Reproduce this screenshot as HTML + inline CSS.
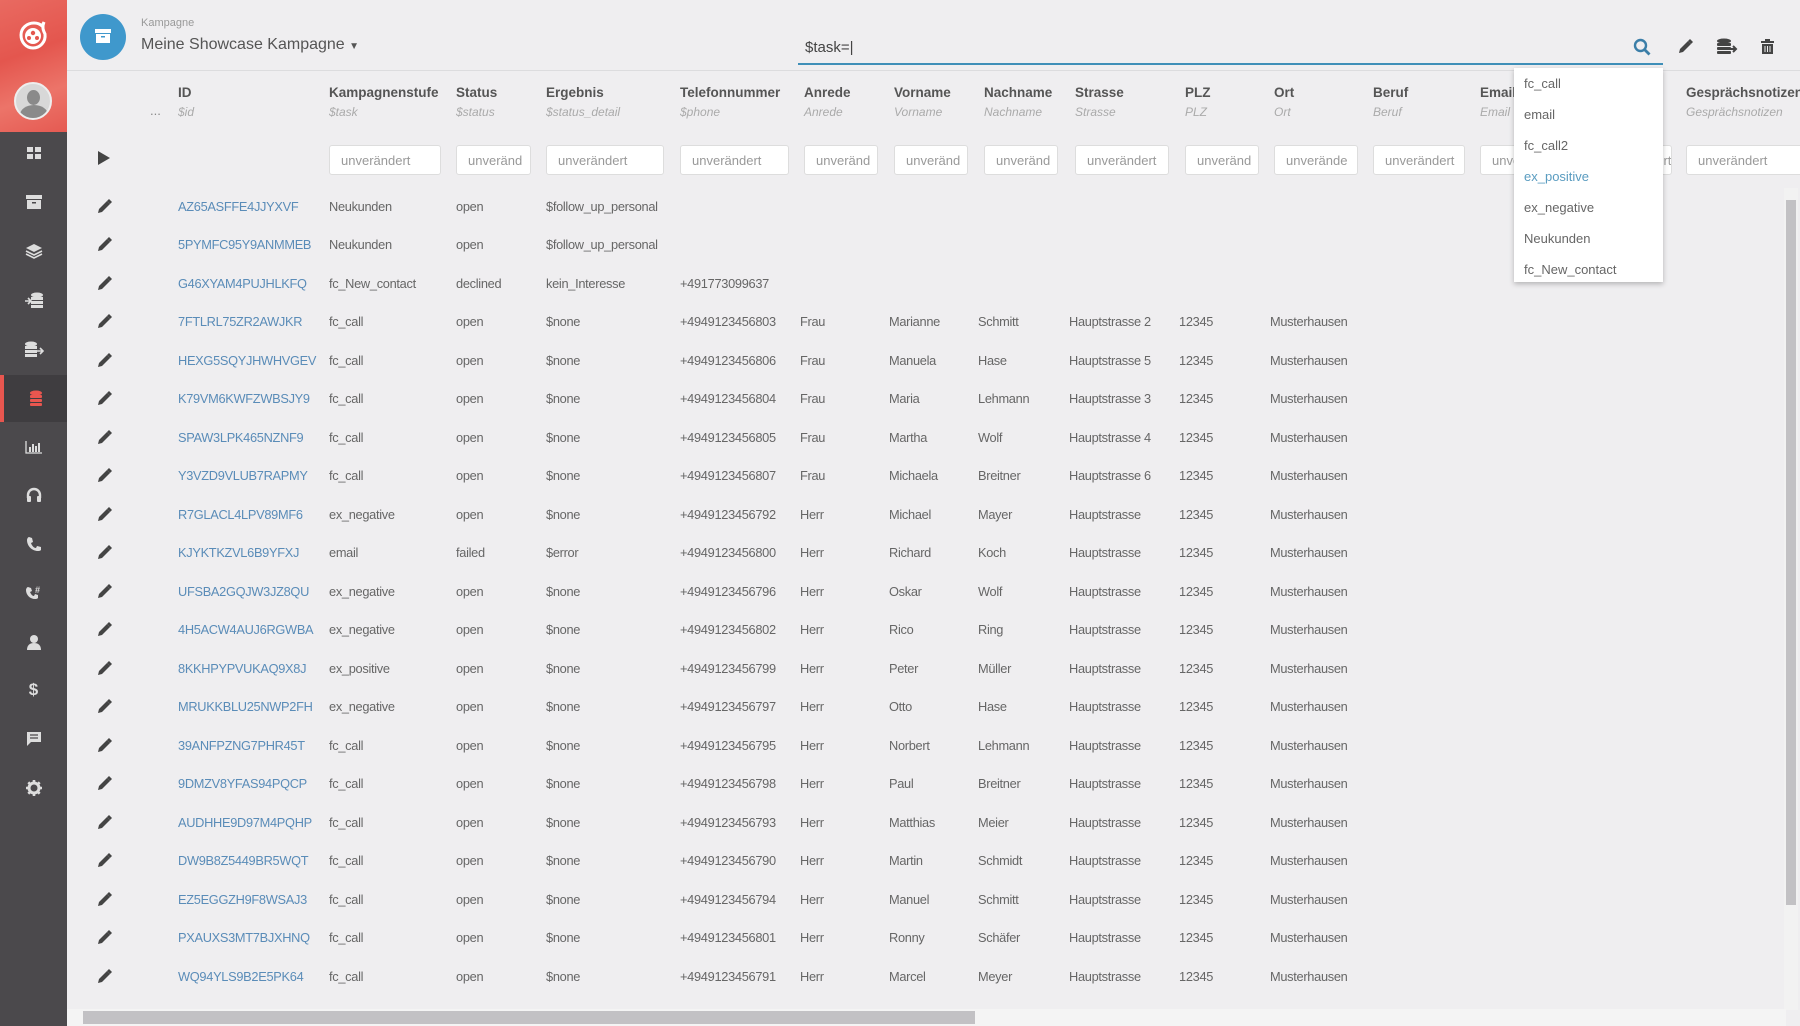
<!DOCTYPE html>
<html><head><meta charset="utf-8"><style>
*{box-sizing:border-box;margin:0;padding:0}
body{width:1800px;height:1026px;overflow:hidden;background:#efeef0;font-family:"Liberation Sans",sans-serif;color:#666;position:relative}
.side{position:absolute;left:0;top:0;width:67px;height:1026px;background:#4b494c}
.red{position:absolute;left:0;top:0;width:67px;height:132px;background:linear-gradient(160deg,#e96a61 0%,#e4564e 40%,#ec7469 70%,#e55a52 100%)}
.si{position:absolute;left:0;width:67px;height:24px;display:flex;align-items:center;justify-content:center}
.act{position:absolute;left:0;top:375px;width:67px;height:47px;background:#3f3d40;border-left:4px solid #e8564f}
.hdr{position:absolute;left:67px;top:0;right:0;height:71px;border-bottom:1px solid #dcdcde}
.t{position:absolute;white-space:nowrap}
.h{font-weight:bold;font-size:13.5px;color:#555;top:85px}
.s{font-style:italic;font-size:12px;color:#aaa;top:105px}
.inp{position:absolute;top:145px;height:30px;background:#fff;border:1px solid #ddd;border-radius:3px;font-size:13px;color:#999;padding:7px 11px;overflow:hidden;white-space:nowrap}
.row{position:absolute;left:67px;height:38px;width:1715px}
.row span{position:absolute;top:11px;font-size:12.8px;letter-spacing:-.3px;white-space:nowrap;color:#666}
.row .id{color:#5a8cb8}
.row svg{position:absolute;left:29px;top:11px}
.a{left:111px}.b{left:262px}.c{left:389px}.d{left:479px}.e{left:613px}.f{left:733px}.g{left:822px}.i{left:911px}.j{left:1002px}.k{left:1112px}.l{left:1203px}
.dd{position:absolute;left:1514px;top:68px;width:149px;height:214px;background:#fff;box-shadow:0 2px 5px rgba(0,0,0,.25)}
.dd div{height:31px;padding:8px 10px;font-size:13px;color:#666}
</style></head><body>
<div class="side">
<div class="red"></div>
<svg style="position:absolute;left:16px;top:18px" width="36" height="36" viewBox="0 0 36 36"><path d="M28 4c-2 5-1 8 1 12 1 8-5 14-12 14S5 24 5 17 11 5 18 5c4 0 6 1 8 3z" fill="none" stroke="#fff" stroke-width="3"/><circle cx="17" cy="18" r="8" fill="#fff"/><circle cx="17" cy="15" r="2.2" fill="#e4564e"/><circle cx="13" cy="20" r="2" fill="#e4564e"/><circle cx="21" cy="20" r="2" fill="#e4564e"/></svg>
<div style="position:absolute;left:14px;top:82px;width:38px;height:38px;border-radius:50%;background:#d8d8d8;overflow:hidden;border:2px solid #eee"><div style="position:absolute;left:11px;top:6px;width:13px;height:15px;border-radius:50%;background:#8a8a8a"></div><div style="position:absolute;left:4px;top:21px;width:28px;height:20px;border-radius:50% 50% 0 0;background:#8a8a8a"></div></div>
<div class="act"></div>
<div class="si" style="top:141px"><svg width="16" height="14"><rect x="1" y="1" width="6" height="5" fill="#ddd"/><rect x="9" y="1" width="6" height="5" fill="#ddd"/><rect x="1" y="8" width="6" height="5" fill="#ddd"/><rect x="9" y="8" width="6" height="5" fill="#ddd"/></svg></div>
<div class="si" style="top:190px"><svg width="18" height="16"><rect x="1" y="1" width="16" height="4" fill="#ddd"/><rect x="2" y="6" width="14" height="9" fill="#ddd"/><rect x="7" y="8" width="4" height="1.5" fill="#4b494c"/></svg></div>
<div class="si" style="top:239px"><svg width="18" height="16"><path d="M9 1l8 4-8 4-8-4z" fill="#ddd"/><path d="M1 8l8 4 8-4M1 11l8 4 8-4" stroke="#ddd" stroke-width="1.6" fill="none"/></svg></div>
<div class="si" style="top:288px"><svg width="20" height="16"><ellipse cx="13" cy="3" rx="6" ry="2.5" fill="#ddd"/><rect x="7" y="5" width="12" height="3" fill="#ddd"/><rect x="7" y="9" width="12" height="3" fill="#ddd"/><rect x="7" y="13" width="12" height="3" fill="#ddd"/><path d="M1 9h5M4 6l3 3-3 3" stroke="#ddd" stroke-width="1.6" fill="none"/></svg></div>
<div class="si" style="top:337px"><svg width="20" height="16"><ellipse cx="7" cy="3" rx="6" ry="2.5" fill="#ddd"/><rect x="1" y="5" width="12" height="3" fill="#ddd"/><rect x="1" y="9" width="12" height="3" fill="#ddd"/><rect x="1" y="13" width="12" height="3" fill="#ddd"/><path d="M13 10h6M16 7l3 3-3 3" stroke="#ddd" stroke-width="1.6" fill="none"/></svg></div>
<div class="si" style="top:386px;left:2px"><svg width="14" height="16"><ellipse cx="7" cy="3" rx="6" ry="2.5" fill="#e8564f"/><rect x="1" y="5" width="12" height="3" rx="1" fill="#e8564f"/><rect x="1" y="9" width="12" height="3" rx="1" fill="#e8564f"/><rect x="1" y="13" width="12" height="3" rx="1" fill="#e8564f"/></svg></div>
<div class="si" style="top:435px"><svg width="18" height="14"><path d="M1 1v12h16" stroke="#ddd" fill="none" stroke-width="1.3"/><rect x="4" y="7" width="2" height="5" fill="#ddd"/><rect x="7" y="4" width="2" height="8" fill="#ddd"/><rect x="10" y="6" width="2" height="6" fill="#ddd"/><rect x="13" y="3" width="2" height="9" fill="#ddd"/></svg></div>
<div class="si" style="top:483px"><svg width="16" height="16"><path d="M2 11V8a6 6 0 0112 0v3" stroke="#ddd" stroke-width="2.4" fill="none"/><rect x="1" y="9" width="4" height="6" rx="1" fill="#ddd"/><rect x="11" y="9" width="4" height="6" rx="1" fill="#ddd"/></svg></div>
<div class="si" style="top:532px"><svg width="16" height="16"><path d="M3 1l3 1 1 4-2 1c1 3 3 5 5 5l1-2 4 1 0 3c-1 1-2 1-3 1C6 15 1 10 1 4c0-1 1-3 2-3z" fill="#ddd"/></svg></div>
<div class="si" style="top:580px"><svg width="18" height="16"><path d="M3 3l3 1 1 3-2 1c1 2 2 4 4 4l1-2 3 1 0 3c-1 1-2 1-3 1C5 15 1 11 1 6c0-1 1-3 2-3z" fill="#ddd"/><text x="10" y="9" font-size="9" font-weight="bold" fill="#ddd" font-family="Liberation Sans">#</text></svg></div>
<div class="si" style="top:630px"><svg width="14" height="16"><circle cx="7" cy="5" r="4" fill="#ddd"/><path d="M0 16c0-5 3-7 7-7s7 2 7 7z" fill="#ddd"/></svg></div>
<div class="si" style="top:678px;color:#ddd;font-weight:bold;font-size:17px">$</div>
<div class="si" style="top:727px"><svg width="16" height="16"><path d="M1 1h14v10H5l-4 4z" fill="#ddd"/><path d="M4 4h8M4 7h8" stroke="#4b494c" stroke-width="1.3"/></svg></div>
<div class="si" style="top:776px"><svg width="16" height="16"><circle cx="8" cy="8" r="5" fill="none" stroke="#ddd" stroke-width="3"/><path d="M8 0v3M8 13v3M0 8h3M13 8h3M2.3 2.3l2 2M11.7 11.7l2 2M2.3 13.7l2-2M11.7 4.3l2-2" stroke="#ddd" stroke-width="2.6"/></svg></div>
</div>
<div class="hdr"></div>
<div style="position:absolute;left:80px;top:14px;width:46px;height:46px;border-radius:50%;background:#3f98cc"></div>
<svg style="position:absolute;left:95px;top:28px" width="16" height="16"><rect x="0" y="1" width="16" height="4" fill="#fff"/><rect x="1" y="6" width="14" height="9" fill="#fff"/><rect x="6" y="8" width="4" height="1.5" fill="#3f98cc"/></svg>
<div class="t" style="left:141px;top:17px;font-size:11px;color:#999">Kampagne</div>
<div class="t" style="left:141px;top:36px;font-size:16px;color:#555">Meine Showcase Kampagne <span style="font-size:10px">▼</span></div>
<div style="position:absolute;left:798px;top:63px;width:865px;height:2px;background:#3f8fb8"></div>
<div class="t" style="left:805px;top:39px;font-size:15px;color:#444">$task=|</div>
<svg style="position:absolute;left:1633px;top:38px" width="18" height="18"><circle cx="7.5" cy="7.5" r="5.5" stroke="#3b7ea8" stroke-width="2.4" fill="none"/><path d="M11.5 11.5l5 5" stroke="#3b7ea8" stroke-width="2.8"/></svg>
<svg style="position:absolute;left:1677px;top:39px" width="16" height="16"><path d="M2 14l1-4 8-8 3 3-8 8z" fill="#444"/><path d="M11 2l2-2 3 3-2 2z" fill="#444"/></svg>
<svg style="position:absolute;left:1716px;top:38px" width="22" height="18"><ellipse cx="8" cy="3" rx="7" ry="2.5" fill="#444"/><rect x="1" y="5" width="14" height="3" rx="1" fill="#444"/><rect x="1" y="9" width="14" height="3" rx="1" fill="#444"/><rect x="1" y="13" width="14" height="3" rx="1" fill="#444"/><path d="M14 11h6M17 8l3 3-3 3" stroke="#444" stroke-width="2" fill="none"/></svg>
<svg style="position:absolute;left:1761px;top:39px" width="13" height="16"><rect x="0" y="2" width="13" height="2" fill="#444"/><rect x="4" y="0" width="5" height="2" fill="#444"/><path d="M1 5h11v10H1z" fill="#444"/><path d="M4 7v6M6.5 7v6M9 7v6" stroke="#eee" stroke-width="1"/></svg>

<div class="t" style="left:150px;top:103px;font-size:13px;color:#888">...</div>
<div class="t h" style="left:178px">ID</div><div class="t s" style="left:178px">$id</div>
<div class="t h" style="left:329px">Kampagnenstufe</div><div class="t s" style="left:329px">$task</div>
<div class="t h" style="left:456px">Status</div><div class="t s" style="left:456px">$status</div>
<div class="t h" style="left:546px">Ergebnis</div><div class="t s" style="left:546px">$status_detail</div>
<div class="t h" style="left:680px">Telefonnummer</div><div class="t s" style="left:680px">$phone</div>
<div class="t h" style="left:804px">Anrede</div><div class="t s" style="left:804px">Anrede</div>
<div class="t h" style="left:894px">Vorname</div><div class="t s" style="left:894px">Vorname</div>
<div class="t h" style="left:984px">Nachname</div><div class="t s" style="left:984px">Nachname</div>
<div class="t h" style="left:1075px">Strasse</div><div class="t s" style="left:1075px">Strasse</div>
<div class="t h" style="left:1185px">PLZ</div><div class="t s" style="left:1185px">PLZ</div>
<div class="t h" style="left:1274px">Ort</div><div class="t s" style="left:1274px">Ort</div>
<div class="t h" style="left:1373px">Beruf</div><div class="t s" style="left:1373px">Beruf</div>
<div class="t h" style="left:1480px">Email</div><div class="t s" style="left:1480px">Email</div>
<div class="t h" style="left:1686px">Gesprächsnotizen</div><div class="t s" style="left:1686px">Gesprächsnotizen</div>

<svg style="position:absolute;left:97px;top:150px" width="14" height="16"><path d="M1 1l12 7-12 7z" fill="#444"/></svg>
<div class="inp" style="left:329px;width:112px">unverändert</div>
<div class="inp" style="left:456px;width:75px">unveränd</div>
<div class="inp" style="left:546px;width:118px">unverändert</div>
<div class="inp" style="left:680px;width:109px">unverändert</div>
<div class="inp" style="left:804px;width:74px">unveränd</div>
<div class="inp" style="left:894px;width:74px">unveränd</div>
<div class="inp" style="left:984px;width:74px">unveränd</div>
<div class="inp" style="left:1075px;width:94px">unverändert</div>
<div class="inp" style="left:1185px;width:74px">unveränd</div>
<div class="inp" style="left:1274px;width:84px">unverände</div>
<div class="inp" style="left:1373px;width:92px">unverändert</div>
<div class="inp" style="left:1480px;width:92px">unverändert</div>
<div class="inp" style="left:1590px;width:82px">unverändert</div>
<div class="inp" style="left:1686px;width:120px">unverändert</div>

<div id="rows">
<div class="row" style="top:188px"><svg width="16" height="16"><path d="M2 14l1-4 8-8 3 3-8 8z" fill="#444"/><path d="M11 2l2-2 3 3-2 2z" fill="#444"/></svg><span class="a id">AZ65ASFFE4JJYXVF</span><span class="b">Neukunden</span><span class="c">open</span><span class="d">$follow_up_personal</span></div>
<div class="row" style="top:226px"><svg width="16" height="16"><path d="M2 14l1-4 8-8 3 3-8 8z" fill="#444"/><path d="M11 2l2-2 3 3-2 2z" fill="#444"/></svg><span class="a id">5PYMFC95Y9ANMMEB</span><span class="b">Neukunden</span><span class="c">open</span><span class="d">$follow_up_personal</span></div>
<div class="row" style="top:265px"><svg width="16" height="16"><path d="M2 14l1-4 8-8 3 3-8 8z" fill="#444"/><path d="M11 2l2-2 3 3-2 2z" fill="#444"/></svg><span class="a id">G46XYAM4PUJHLKFQ</span><span class="b">fc_New_contact</span><span class="c">declined</span><span class="d">kein_Interesse</span><span class="e">+491773099637</span></div>
<div class="row" style="top:303px"><svg width="16" height="16"><path d="M2 14l1-4 8-8 3 3-8 8z" fill="#444"/><path d="M11 2l2-2 3 3-2 2z" fill="#444"/></svg><span class="a id">7FTLRL75ZR2AWJKR</span><span class="b">fc_call</span><span class="c">open</span><span class="d">$none</span><span class="e">+4949123456803</span><span class="f">Frau</span><span class="g">Marianne</span><span class="i">Schmitt</span><span class="j">Hauptstrasse 2</span><span class="k">12345</span><span class="l">Musterhausen</span></div>
<div class="row" style="top:342px"><svg width="16" height="16"><path d="M2 14l1-4 8-8 3 3-8 8z" fill="#444"/><path d="M11 2l2-2 3 3-2 2z" fill="#444"/></svg><span class="a id">HEXG5SQYJHWHVGEV</span><span class="b">fc_call</span><span class="c">open</span><span class="d">$none</span><span class="e">+4949123456806</span><span class="f">Frau</span><span class="g">Manuela</span><span class="i">Hase</span><span class="j">Hauptstrasse 5</span><span class="k">12345</span><span class="l">Musterhausen</span></div>
<div class="row" style="top:380px"><svg width="16" height="16"><path d="M2 14l1-4 8-8 3 3-8 8z" fill="#444"/><path d="M11 2l2-2 3 3-2 2z" fill="#444"/></svg><span class="a id">K79VM6KWFZWBSJY9</span><span class="b">fc_call</span><span class="c">open</span><span class="d">$none</span><span class="e">+4949123456804</span><span class="f">Frau</span><span class="g">Maria</span><span class="i">Lehmann</span><span class="j">Hauptstrasse 3</span><span class="k">12345</span><span class="l">Musterhausen</span></div>
<div class="row" style="top:419px"><svg width="16" height="16"><path d="M2 14l1-4 8-8 3 3-8 8z" fill="#444"/><path d="M11 2l2-2 3 3-2 2z" fill="#444"/></svg><span class="a id">SPAW3LPK465NZNF9</span><span class="b">fc_call</span><span class="c">open</span><span class="d">$none</span><span class="e">+4949123456805</span><span class="f">Frau</span><span class="g">Martha</span><span class="i">Wolf</span><span class="j">Hauptstrasse 4</span><span class="k">12345</span><span class="l">Musterhausen</span></div>
<div class="row" style="top:457px"><svg width="16" height="16"><path d="M2 14l1-4 8-8 3 3-8 8z" fill="#444"/><path d="M11 2l2-2 3 3-2 2z" fill="#444"/></svg><span class="a id">Y3VZD9VLUB7RAPMY</span><span class="b">fc_call</span><span class="c">open</span><span class="d">$none</span><span class="e">+4949123456807</span><span class="f">Frau</span><span class="g">Michaela</span><span class="i">Breitner</span><span class="j">Hauptstrasse 6</span><span class="k">12345</span><span class="l">Musterhausen</span></div>
<div class="row" style="top:496px"><svg width="16" height="16"><path d="M2 14l1-4 8-8 3 3-8 8z" fill="#444"/><path d="M11 2l2-2 3 3-2 2z" fill="#444"/></svg><span class="a id">R7GLACL4LPV89MF6</span><span class="b">ex_negative</span><span class="c">open</span><span class="d">$none</span><span class="e">+4949123456792</span><span class="f">Herr</span><span class="g">Michael</span><span class="i">Mayer</span><span class="j">Hauptstrasse</span><span class="k">12345</span><span class="l">Musterhausen</span></div>
<div class="row" style="top:534px"><svg width="16" height="16"><path d="M2 14l1-4 8-8 3 3-8 8z" fill="#444"/><path d="M11 2l2-2 3 3-2 2z" fill="#444"/></svg><span class="a id">KJYKTKZVL6B9YFXJ</span><span class="b">email</span><span class="c">failed</span><span class="d">$error</span><span class="e">+4949123456800</span><span class="f">Herr</span><span class="g">Richard</span><span class="i">Koch</span><span class="j">Hauptstrasse</span><span class="k">12345</span><span class="l">Musterhausen</span></div>
<div class="row" style="top:573px"><svg width="16" height="16"><path d="M2 14l1-4 8-8 3 3-8 8z" fill="#444"/><path d="M11 2l2-2 3 3-2 2z" fill="#444"/></svg><span class="a id">UFSBA2GQJW3JZ8QU</span><span class="b">ex_negative</span><span class="c">open</span><span class="d">$none</span><span class="e">+4949123456796</span><span class="f">Herr</span><span class="g">Oskar</span><span class="i">Wolf</span><span class="j">Hauptstrasse</span><span class="k">12345</span><span class="l">Musterhausen</span></div>
<div class="row" style="top:611px"><svg width="16" height="16"><path d="M2 14l1-4 8-8 3 3-8 8z" fill="#444"/><path d="M11 2l2-2 3 3-2 2z" fill="#444"/></svg><span class="a id">4H5ACW4AUJ6RGWBA</span><span class="b">ex_negative</span><span class="c">open</span><span class="d">$none</span><span class="e">+4949123456802</span><span class="f">Herr</span><span class="g">Rico</span><span class="i">Ring</span><span class="j">Hauptstrasse</span><span class="k">12345</span><span class="l">Musterhausen</span></div>
<div class="row" style="top:650px"><svg width="16" height="16"><path d="M2 14l1-4 8-8 3 3-8 8z" fill="#444"/><path d="M11 2l2-2 3 3-2 2z" fill="#444"/></svg><span class="a id">8KKHPYPVUKAQ9X8J</span><span class="b">ex_positive</span><span class="c">open</span><span class="d">$none</span><span class="e">+4949123456799</span><span class="f">Herr</span><span class="g">Peter</span><span class="i">Müller</span><span class="j">Hauptstrasse</span><span class="k">12345</span><span class="l">Musterhausen</span></div>
<div class="row" style="top:688px"><svg width="16" height="16"><path d="M2 14l1-4 8-8 3 3-8 8z" fill="#444"/><path d="M11 2l2-2 3 3-2 2z" fill="#444"/></svg><span class="a id">MRUKKBLU25NWP2FH</span><span class="b">ex_negative</span><span class="c">open</span><span class="d">$none</span><span class="e">+4949123456797</span><span class="f">Herr</span><span class="g">Otto</span><span class="i">Hase</span><span class="j">Hauptstrasse</span><span class="k">12345</span><span class="l">Musterhausen</span></div>
<div class="row" style="top:727px"><svg width="16" height="16"><path d="M2 14l1-4 8-8 3 3-8 8z" fill="#444"/><path d="M11 2l2-2 3 3-2 2z" fill="#444"/></svg><span class="a id">39ANFPZNG7PHR45T</span><span class="b">fc_call</span><span class="c">open</span><span class="d">$none</span><span class="e">+4949123456795</span><span class="f">Herr</span><span class="g">Norbert</span><span class="i">Lehmann</span><span class="j">Hauptstrasse</span><span class="k">12345</span><span class="l">Musterhausen</span></div>
<div class="row" style="top:765px"><svg width="16" height="16"><path d="M2 14l1-4 8-8 3 3-8 8z" fill="#444"/><path d="M11 2l2-2 3 3-2 2z" fill="#444"/></svg><span class="a id">9DMZV8YFAS94PQCP</span><span class="b">fc_call</span><span class="c">open</span><span class="d">$none</span><span class="e">+4949123456798</span><span class="f">Herr</span><span class="g">Paul</span><span class="i">Breitner</span><span class="j">Hauptstrasse</span><span class="k">12345</span><span class="l">Musterhausen</span></div>
<div class="row" style="top:804px"><svg width="16" height="16"><path d="M2 14l1-4 8-8 3 3-8 8z" fill="#444"/><path d="M11 2l2-2 3 3-2 2z" fill="#444"/></svg><span class="a id">AUDHHE9D97M4PQHP</span><span class="b">fc_call</span><span class="c">open</span><span class="d">$none</span><span class="e">+4949123456793</span><span class="f">Herr</span><span class="g">Matthias</span><span class="i">Meier</span><span class="j">Hauptstrasse</span><span class="k">12345</span><span class="l">Musterhausen</span></div>
<div class="row" style="top:842px"><svg width="16" height="16"><path d="M2 14l1-4 8-8 3 3-8 8z" fill="#444"/><path d="M11 2l2-2 3 3-2 2z" fill="#444"/></svg><span class="a id">DW9B8Z5449BR5WQT</span><span class="b">fc_call</span><span class="c">open</span><span class="d">$none</span><span class="e">+4949123456790</span><span class="f">Herr</span><span class="g">Martin</span><span class="i">Schmidt</span><span class="j">Hauptstrasse</span><span class="k">12345</span><span class="l">Musterhausen</span></div>
<div class="row" style="top:881px"><svg width="16" height="16"><path d="M2 14l1-4 8-8 3 3-8 8z" fill="#444"/><path d="M11 2l2-2 3 3-2 2z" fill="#444"/></svg><span class="a id">EZ5EGGZH9F8WSAJ3</span><span class="b">fc_call</span><span class="c">open</span><span class="d">$none</span><span class="e">+4949123456794</span><span class="f">Herr</span><span class="g">Manuel</span><span class="i">Schmitt</span><span class="j">Hauptstrasse</span><span class="k">12345</span><span class="l">Musterhausen</span></div>
<div class="row" style="top:919px"><svg width="16" height="16"><path d="M2 14l1-4 8-8 3 3-8 8z" fill="#444"/><path d="M11 2l2-2 3 3-2 2z" fill="#444"/></svg><span class="a id">PXAUXS3MT7BJXHNQ</span><span class="b">fc_call</span><span class="c">open</span><span class="d">$none</span><span class="e">+4949123456801</span><span class="f">Herr</span><span class="g">Ronny</span><span class="i">Schäfer</span><span class="j">Hauptstrasse</span><span class="k">12345</span><span class="l">Musterhausen</span></div>
<div class="row" style="top:958px"><svg width="16" height="16"><path d="M2 14l1-4 8-8 3 3-8 8z" fill="#444"/><path d="M11 2l2-2 3 3-2 2z" fill="#444"/></svg><span class="a id">WQ94YLS9B2E5PK64</span><span class="b">fc_call</span><span class="c">open</span><span class="d">$none</span><span class="e">+4949123456791</span><span class="f">Herr</span><span class="g">Marcel</span><span class="i">Meyer</span><span class="j">Hauptstrasse</span><span class="k">12345</span><span class="l">Musterhausen</span></div>
</div>

<div class="dd"><div>fc_call</div><div>email</div><div>fc_call2</div><div style="color:#5a9cc0">ex_positive</div><div>ex_negative</div><div>Neukunden</div><div>fc_New_contact</div></div>

<div style="position:absolute;left:1784px;top:188px;width:14px;height:822px;background:#f2f2f2"></div>
<div style="position:absolute;left:1786px;top:200px;width:10px;height:705px;background:#c2c1c4"></div>
<div style="position:absolute;left:67px;top:1009px;width:1719px;height:17px;background:#f4f4f4"></div>
<div style="position:absolute;left:83px;top:1011px;width:892px;height:13px;background:#c2c1c4"></div>
</body></html>
